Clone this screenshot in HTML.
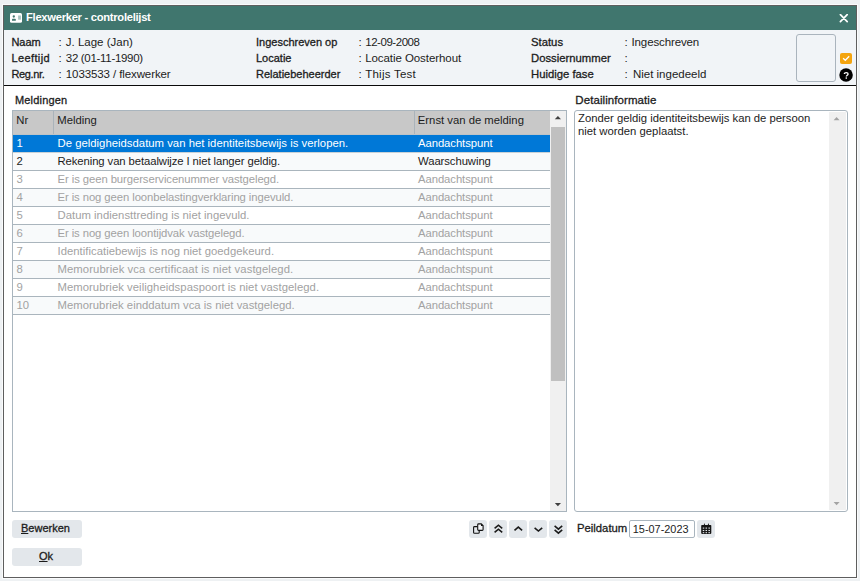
<!DOCTYPE html>
<html><head><meta charset="utf-8">
<style>
*{box-sizing:border-box;margin:0;padding:0}
html,body{width:860px;height:581px;overflow:hidden;background:#eef1f3;font-family:"Liberation Sans",sans-serif;font-size:11px;color:#1c1c1c}
.a{position:absolute;white-space:nowrap;line-height:1}
#frame{position:absolute;left:2px;top:4px;width:856px;height:575px;background:#fafbfc}
#dlg{position:absolute;left:3px;top:5px;width:854px;height:573px;border:1px solid #5e5e5e;background:#fff}
#title{position:absolute;left:4px;top:6px;width:852px;height:24px;background:#40766e}
#info{position:absolute;left:4px;top:30px;width:852px;height:56px;background:#f1f4f7;border-bottom:1px solid #0a0a0a}
.lb{font-size:11px;-webkit-text-stroke:0.3px #1c1c1c}
.v{font-size:11.5px}
#tbl{position:absolute;left:12px;top:110px;width:555px;height:402px;border:1px solid #a9b5be;background:#fff}
#thead{position:absolute;left:13px;top:111px;width:537px;height:24px;background:#c8c8c8;border-bottom:1px solid #bfc3c6}
.sep{position:absolute;top:111px;width:1px;height:23px;background:#aab3ba}
.row{position:absolute;left:13px;width:537px;height:18px;border-bottom:1px solid #aab5bd;font-size:11.3px}
.row span{position:absolute;top:3px;white-space:nowrap;line-height:1}
.c1{left:3.5px} .c2{left:44.5px} .c3{left:405px;letter-spacing:-0.07px}
.sel{background:#0078d7;color:#fff;border-bottom-color:#c9d1d6}
.blk{color:#1c1c1c}
.gr{color:#a2a2a2}
.ev{background:#f8fafb}
#vs{position:absolute;left:550px;top:111px;width:16px;height:400px;background:#f0f0f0}
#thumb{position:absolute;left:551px;top:127px;width:14px;height:254px;background:#c0c0c0}
#det{position:absolute;left:574px;top:110px;width:274px;height:402px;border:1px solid #a9b5be;border-radius:3px;background:#fff}
#dvs{position:absolute;left:829px;top:112px;width:17px;height:398px;background:#f0f0f0}
.btn{position:absolute;background:#e3e7eb;border-radius:3px}
</style></head><body>
<div id="frame"></div>
<div id="dlg"></div>
<div id="title"></div>
<svg class="a" style="left:10px;top:13px" width="12" height="10" viewBox="0 0 12 10"><rect x="0" y="0" width="12" height="9.8" rx="1.6" fill="#fff"/><circle cx="3.8" cy="3.5" r="1.15" fill="#40766e"/><path d="M2 7.7V6.6C2 6.1 2.5 5.8 3 5.8H4.7C5.2 5.8 5.8 6.1 5.8 6.6V7.7Z" fill="#40766e"/><rect x="8.1" y="2.5" width="2.8" height="4.2" fill="#a9c4c0"/></svg>
<div class="a" style="left:26px;top:11.5px;font-size:11.2px;font-weight:bold;letter-spacing:-0.28px;color:#fff">Flexwerker - controlelijst</div>
<svg class="a" style="left:839px;top:14px" width="10" height="9" viewBox="0 0 10 9"><path d="M1.4 0.6L8.2 7.6M8.2 0.6L1.4 7.6" stroke="#fff" stroke-width="1.7" stroke-linecap="round"/></svg>
<div id="info"></div>
<div class="a lb" style="left:11.4px;top:37px">Naam</div>
<div class="a lb" style="left:11.4px;top:53px;letter-spacing:0.4px">Leeftijd</div>
<div class="a lb" style="left:11.4px;top:69px;letter-spacing:-0.35px">Reg.nr.</div>
<div class="a v" style="left:58.5px;top:37px">:</div><div class="a v" style="left:65.8px;top:37px">J. Lage (Jan)</div>
<div class="a v" style="left:58.5px;top:53px">:</div><div class="a v" style="left:65.8px;top:53px;letter-spacing:-0.31px">32 (01-11-1990)</div>
<div class="a v" style="left:58.5px;top:69px">:</div><div class="a v" style="left:65.8px;top:69px;letter-spacing:-0.1px">1033533 / flexwerker</div>
<div class="a lb" style="left:256px;top:37px">Ingeschreven op</div>
<div class="a lb" style="left:256px;top:53px">Locatie</div>
<div class="a lb" style="left:256px;top:69px">Relatiebeheerder</div>
<div class="a v" style="left:358.5px;top:37px">:</div><div class="a v" style="left:365.2px;top:37px;letter-spacing:-0.45px">12-09-2008</div>
<div class="a v" style="left:358.5px;top:53px">:</div><div class="a v" style="left:365.2px;top:53px;letter-spacing:-0.07px">Locatie Oosterhout</div>
<div class="a v" style="left:358.5px;top:69px">:</div><div class="a v" style="left:365.2px;top:69px;letter-spacing:0.25px">Thijs Test</div>
<div class="a lb" style="left:531px;top:37px;font-size:11.3px">Status</div>
<div class="a lb" style="left:531px;top:53px;font-size:11.3px">Dossiernummer</div>
<div class="a lb" style="left:531px;top:69px;font-size:11.3px">Huidige fase</div>
<div class="a v" style="left:624.5px;top:37px">:</div><div class="a v" style="left:631.5px;top:37px;letter-spacing:-0.12px">Ingeschreven</div>
<div class="a v" style="left:624.5px;top:53px">:</div>
<div class="a v" style="left:624.5px;top:69px">:</div><div class="a v" style="left:632.9px;top:69px">Niet ingedeeld</div>
<div class="a" style="left:796px;top:34px;width:40px;height:48px;border:1px solid #aab4bd;border-radius:3px;background:#f1f4f7"></div>
<div class="a" style="left:840px;top:53px;width:12px;height:11px;background:#f4a40e;border-radius:2px"></div>
<svg class="a" style="left:840px;top:53px" width="12" height="11" viewBox="0 0 12 11"><path d="M3.1 5.3L5.3 7.3L9.2 3.2" stroke="#fff" stroke-width="1.25" fill="none"/></svg>
<svg class="a" style="left:839px;top:68px" width="14" height="14" viewBox="0 0 14 14"><circle cx="7.05" cy="7" r="6.75" fill="#000"/><path d="M5.3 6.1C5.3 5 6.1 4.6 7.2 4.6C8.3 4.6 9.1 5.2 9.1 6C9.1 7.2 7.3 7.3 7.3 8.6" stroke="#fff" stroke-width="1.3" fill="none"/><rect x="6.6" y="9.4" width="1.4" height="1.3" fill="#fff"/></svg>

<div class="a lb" style="left:15px;top:95px;font-size:11px;letter-spacing:0.17px">Meldingen</div>
<div class="a lb" style="left:575.3px;top:95px;font-size:11.5px;letter-spacing:0.08px">Detailinformatie</div>

<div id="tbl"></div>
<div id="thead"></div>
<div class="sep" style="left:53px"></div>
<div class="sep" style="left:414px"></div>
<div class="a" style="left:16.3px;top:115px;font-size:11.3px">Nr</div>
<div class="a" style="left:57.3px;top:115px;font-size:11.3px">Melding</div>
<div class="a" style="left:417.8px;top:115px;font-size:11.3px">Ernst van de melding</div>
<div class="row sel" style="top:135px"><span class="c1">1</span><span class="c2" style="letter-spacing:0.021px">De geldigheidsdatum van het identiteitsbewijs is verlopen.</span><span class="c3">Aandachtspunt</span></div>
<div class="row blk ev" style="top:153px"><span class="c1">2</span><span class="c2" style="letter-spacing:-0.089px">Rekening van betaalwijze I niet langer geldig.</span><span class="c3">Waarschuwing</span></div>
<div class="row gr" style="top:171px"><span class="c1">3</span><span class="c2" style="letter-spacing:-0.076px">Er is geen burgerservicenummer vastgelegd.</span><span class="c3">Aandachtspunt</span></div>
<div class="row gr ev" style="top:189px"><span class="c1">4</span><span class="c2" style="letter-spacing:-0.085px">Er is nog geen loonbelastingverklaring ingevuld.</span><span class="c3">Aandachtspunt</span></div>
<div class="row gr" style="top:207px"><span class="c1">5</span><span class="c2" style="letter-spacing:0.029px">Datum indiensttreding is niet ingevuld.</span><span class="c3">Aandachtspunt</span></div>
<div class="row gr ev" style="top:225px"><span class="c1">6</span><span class="c2" style="letter-spacing:-0.086px">Er is nog geen loontijdvak vastgelegd.</span><span class="c3">Aandachtspunt</span></div>
<div class="row gr" style="top:243px"><span class="c1">7</span><span class="c2" style="letter-spacing:0.026px">Identificatiebewijs is nog niet goedgekeurd.</span><span class="c3">Aandachtspunt</span></div>
<div class="row gr ev" style="top:261px"><span class="c1">8</span><span class="c2" style="letter-spacing:0.087px">Memorubriek vca certificaat is niet vastgelegd.</span><span class="c3">Aandachtspunt</span></div>
<div class="row gr" style="top:279px"><span class="c1">9</span><span class="c2" style="letter-spacing:0.044px">Memorubriek veiligheidspaspoort is niet vastgelegd.</span><span class="c3">Aandachtspunt</span></div>
<div class="row gr ev" style="top:297px"><span class="c1">10</span><span class="c2" style="letter-spacing:0.025px">Memorubriek einddatum vca is niet vastgelegd.</span><span class="c3">Aandachtspunt</span></div>
<div id="vs"></div>
<div id="thumb"></div>
<svg class="a" style="left:554px;top:115px" width="8" height="6" viewBox="0 0 8 6"><path d="M0.8 4.2L3.9 0.9L7 4.2Z" fill="#404040"/></svg>
<svg class="a" style="left:554px;top:502px" width="8" height="6" viewBox="0 0 8 6"><path d="M0.8 1L3.9 4.3L7 1Z" fill="#404040"/></svg>

<div id="det"></div>
<div id="dvs"></div>
<svg class="a" style="left:833px;top:116px" width="8" height="6" viewBox="0 0 8 6"><path d="M0.6 4.2L3.6 1L6.6 4.2Z" fill="#a3a3a3"/></svg>
<svg class="a" style="left:833px;top:501px" width="8" height="6" viewBox="0 0 8 6"><path d="M0.6 1L3.6 4.2L6.6 1Z" fill="#a3a3a3"/></svg>
<div class="a" style="left:578px;top:112px;line-height:13px;white-space:normal;width:250px;font-size:11.3px">Zonder geldig identiteitsbewijs kan de persoon niet worden geplaatst.</div>

<div class="btn" style="left:12px;top:520px;width:70px;height:18px"></div>
<div class="a lb" style="left:21px;top:523px"><u>B</u>ewerken</div>
<div class="btn" style="left:12px;top:548px;width:70px;height:18px"></div>
<div class="a lb" style="left:39px;top:551px"><u>O</u>k</div>

<div class="btn" style="left:469px;top:520px;width:18px;height:18px"></div>
<div class="btn" style="left:489px;top:520px;width:18px;height:18px"></div>
<div class="btn" style="left:509px;top:520px;width:18px;height:18px"></div>
<div class="btn" style="left:529px;top:520px;width:18px;height:18px"></div>
<div class="btn" style="left:549px;top:520px;width:18px;height:18px"></div>
<svg class="a" style="left:469px;top:520px" width="100" height="18" viewBox="0 0 100 18">
 <g fill="none" stroke="#111" stroke-width="1.1" stroke-linejoin="round">
  <path d="M10.2 10.9V12.4Q10.2 13.3 9.3 13.3H5.5Q4.6 13.3 4.6 12.4V7.55Q4.6 6.65 5.5 6.65H8.7"/>
  <path d="M9.6 3.9H12.3L14.1 5.7V9.5Q14.1 10.4 13.2 10.4H9.6Q8.7 10.4 8.7 9.5V4.8Q8.7 3.9 9.6 3.9Z" fill="#f3f5f7"/>
  <path d="M12 3.6V6H14.4Z" fill="#111" stroke="none"/>
 </g>
 <g fill="none" stroke="#1a1a1a" stroke-width="1.6" stroke-linejoin="miter">
  <path d="M25.6 8.4L29.4 5.2L33.2 8.4M25.6 12.4L29.4 9.2L33.2 12.4"/>
  <path d="M45.5 10.3L49.3 7.1L53.1 10.3"/>
  <path d="M65.6 7.8L69.4 11L73.2 7.8"/>
  <path d="M85.6 5.9L89.4 9.1L93.2 5.9M85.6 9.9L89.4 13.1L93.2 9.9"/>
 </g>
</svg>
<div class="a lb" style="left:577px;top:523px;font-size:11.3px">Peildatum</div>
<div class="a" style="left:629px;top:520px;width:66px;height:18px;border:1px solid #a9b5be;border-radius:2px;background:#fff"></div>
<div class="a" style="left:632.8px;top:523.5px;font-size:10.9px">15-07-2023</div>
<div class="btn" style="left:697px;top:520px;width:18px;height:18px"></div>
<svg class="a" style="left:701px;top:523px" width="11" height="11" viewBox="0 0 11 11"><rect x="0.2" y="1.9" width="10.1" height="9" rx="0.8" fill="#141414"/><path d="M2.7 2.2L3.4 0.1L4.1 2.2ZM6.7 2.2L7.4 0.1L8.1 2.2Z" fill="#141414"/><g fill="#e3e7eb"><rect x="1.75" y="4.55" width="1.5" height="1.1"/><rect x="4.55" y="4.55" width="1.5" height="1.1"/><rect x="7.45" y="4.55" width="1.5" height="1.1"/><rect x="1.75" y="6.95" width="1.5" height="1.1"/><rect x="4.55" y="6.95" width="1.5" height="1.1"/><rect x="7.45" y="6.95" width="1.5" height="1.1"/><rect x="1.75" y="9.15" width="1.5" height="1.1"/><rect x="4.55" y="9.15" width="1.5" height="1.1"/><rect x="7.45" y="9.15" width="1.5" height="1.1"/></g></svg>
</body></html>
